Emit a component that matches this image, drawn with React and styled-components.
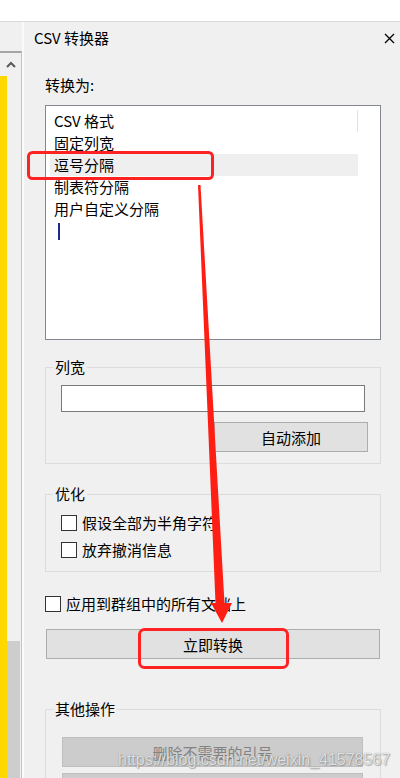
import React from "react";
import styled, { createGlobalStyle } from "styled-components";

const GlobalStyle = createGlobalStyle`
  html, body { margin: 0; padding: 0; background: #f0f0f0; }
  body { font-family: "Noto Sans CJK SC", "Noto Sans", sans-serif; color: #000; }
  * { box-sizing: border-box; }
`;

const Page = styled.div`
  position: relative;
  width: 400px;
  height: 778px;
  overflow: hidden;
  background: #f0f0f0;
  display: flex;
  flex-direction: column;
  font-size: 15px;
`;

const TopBar = styled.div`
  height: 22px;
  flex: none;
  background: #ffffff;
  border-bottom: 1px solid #dadada;
`;

const Body = styled.div`
  flex: 1;
  display: flex;
  min-height: 0;
`;

const LeftStrip = styled.div`
  width: 24px;
  flex: none;
  padding-top: 29px;
  border-right: 2px solid #fafafa;
  display: flex;
  flex-direction: column;
`;

const StripPanel = styled.div`
  flex: 1;
  display: flex;
  flex-direction: column;
  border-top: 2px solid #a6a6a6;
  border-right: 1px solid #c4c4c4;
`;

const StripHeader = styled.div`
  height: 23px;
  flex: none;
  display: flex;
  align-items: center;
  padding-left: 6px;
`;

const StripBody = styled.div`
  flex: 1;
  display: flex;
`;

const YellowBar = styled.div`
  width: 7px;
  background: #ffd800;
`;

const Track = styled.div`
  flex: 1;
  display: flex;
  flex-direction: column;
  background: #f0f0f0;
`;

const Thumb = styled.div`
  margin-top: 565px;
  flex: 1;
  background: #cdcdcd;
  margin-right: 1px;
`;

const Pane = styled.div`
  flex: 1;
  display: flex;
  flex-direction: column;
  padding: 0 19px 0 21px;
  & > * { flex-shrink: 0; }
`;

const TitleRow = styled.div`
  height: 32px;
  margin: 0 -15px 0 -11px;
  display: flex;
  align-items: center;
  justify-content: space-between;
  padding-right: 1px;
`;

const Title = styled.div`
  font-size: 15px;
  line-height: 22px;
`;

const Label = styled.div`
  margin-top: ${(p) => p.$mt || 0}px;
  line-height: 22px;
  height: 22px;
`;

const ListBox = styled.div`
  margin-top: 9px;
  height: 235px;
  background: #ffffff;
  border: 1px solid #828790;
  padding: 4px 0 0 4px;
  display: flex;
  flex-direction: column;
  & > * { flex-shrink: 0; }
`;

const Item = styled.div`
  width: 308px;
  height: 22px;
  line-height: 22px;
  padding-left: 4px;
  white-space: nowrap;
  background: ${(p) => (p.$selected ? "#efefef" : "transparent")};
  border-right: 1px solid ${(p) => (p.$divider ? "#e2e2e2" : "transparent")};
`;

const CaretRow = styled.div`
  height: 22px;
  padding: 3px 0 0 8px;
`;

const TextCaret = styled.div`
  width: 2px;
  height: 17px;
  background: #1e2a8c;
`;

const Group = styled.fieldset`
  margin: ${(p) => p.$mt}px 0 0 0;
  padding: 0 0 ${(p) => p.$pb}px 0;
  min-width: 0;
  border: 1px solid #dcdcdc;
  display: flex;
  flex-direction: column;
  & > * { flex-shrink: 0; }
`;

const Legend = styled.legend`
  font-size: 15px;
  line-height: 22px;
  padding: 0 2px;
  margin-left: 7px;
`;

const TextInput = styled.div`
  margin: 7px 0 0 15px;
  width: 304px;
  height: 27px;
  background: #ffffff;
  border: 1px solid #7a7a7a;
`;

const Button = styled.div`
  margin: ${(p) => p.$mt || 0}px 0 0 ${(p) => p.$ml || 0}px;
  width: ${(p) => p.$w}px;
  height: ${(p) => p.$h || 30}px;
  display: flex;
  align-items: center;
  justify-content: center;
  font-size: 15px;
  background: ${(p) => (p.$disabled ? "#cccccc" : "#e1e1e1")};
  border: 1px solid ${(p) => (p.$disabled ? "#bfbfbf" : "#adadad")};
  color: ${(p) => (p.$disabled ? "#838383" : "#000")};
`;

const CheckRow = styled.div`
  display: flex;
  align-items: center;
  height: 27px;
  margin-top: ${(p) => p.$mt || 0}px;
  padding-left: ${(p) => p.$pl || 0}px;
  gap: 5px;
  white-space: nowrap;
`;

const Box = styled.div`
  width: 16px;
  height: 16px;
  flex: none;
  background: #ffffff;
  border: 1px solid #333333;
`;

const Overlay = styled.svg`
  position: absolute;
  left: 0;
  top: 0;
  pointer-events: none;
`;

const Watermark = styled.div`
  position: absolute;
  left: 118px;
  top: 750px;
  font-family: "Liberation Sans", Arial, sans-serif;
  font-size: 16px;
  line-height: 20px;
  color: rgba(255, 255, 255, 0.75);
  text-shadow: 0 0 1px rgba(90, 90, 90, 0.7), 1px 1px 1px rgba(120, 120, 120, 0.5);
  white-space: nowrap;
`;

function Chevron() {
  return (
    <svg width="10" height="7" viewBox="0 0 10 7">
      <path d="M1 6 L5 2 L9 6" fill="none" stroke="#5a5a5a" strokeWidth="2" />
    </svg>
  );
}

function CloseIcon() {
  return (
    <svg width="11" height="11" viewBox="0 0 11 11">
      <path d="M1 1 L10 10 M10 1 L1 10" stroke="#000" strokeWidth="1.3" />
    </svg>
  );
}

const items = ["CSV 格式", "固定列宽", "逗号分隔", "制表符分隔", "用户自定义分隔"];

export default function App() {
  return (
    <>
      <GlobalStyle />
      <Page>
        <TopBar />
        <Body>
          <LeftStrip>
            <StripPanel>
              <StripHeader>
                <Chevron />
              </StripHeader>
              <StripBody>
                <YellowBar />
                <Track>
                  <Thumb />
                </Track>
              </StripBody>
            </StripPanel>
          </LeftStrip>
          <Pane>
            <TitleRow>
              <Title>CSV 转换器</Title>
              <CloseIcon />
            </TitleRow>
            <Label $mt={20}>转换为:</Label>
            <ListBox>
              {items.map((t, i) => (
                <Item key={t} $selected={i === 2} $divider={i === 0}>
                  {t}
                </Item>
              ))}
              <CaretRow>
                <TextCaret />
              </CaretRow>
            </ListBox>
            <Group $mt={16} $pb={11}>
              <Legend>列宽</Legend>
              <TextInput />
              <Button $mt={10} $ml={168} $w={154}>
                自动添加
              </Button>
            </Group>
            <Group $mt={19} $pb={8}>
              <Legend>优化</Legend>
              <CheckRow $mt={4} $pl={15}>
                <Box />
                假设全部为半角字符
              </CheckRow>
              <CheckRow $pl={15}>
                <Box />
                放弃撤消信息
              </CheckRow>
            </Group>
            <CheckRow $mt={18}>
              <Box />
              应用到群组中的所有文档上
            </CheckRow>
            <Button $mt={12} $ml={1} $w={334}>
              立即转换
            </Button>
            <Group $mt={39} $pb={0}>
              <Legend>其他操作</Legend>
              <Button $mt={17} $ml={16} $w={301} $disabled>
                删除不需要的引号
              </Button>
              <Button $mt={6} $ml={16} $w={301} $disabled />
            </Group>
          </Pane>
        </Body>
        <Overlay width="400" height="778" viewBox="0 0 400 778">
          <rect x="28.5" y="152.5" width="184" height="26" rx="4" fill="none" stroke="#ff2222" strokeWidth="3" />
          <rect x="139.5" y="629.5" width="148" height="38" rx="5" fill="none" stroke="#ff2222" strokeWidth="3" />
          <polygon
            points="198,185 200.5,185 224.5,603 232,603 222,623 211,603 215.5,603"
            fill="#ff1e14"
          />
        </Overlay>
        <Watermark>https://blog.csdn.net/weixin_41578567</Watermark>
      </Page>
    </>
  );
}
